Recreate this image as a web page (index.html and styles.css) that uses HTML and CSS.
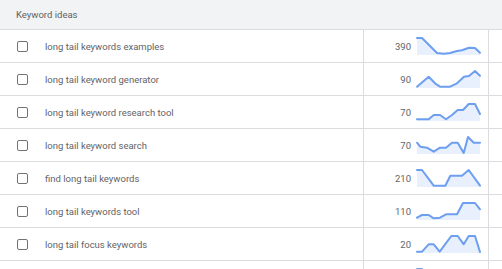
FILE: index.html
```html
<!DOCTYPE html>
<html>
<head>
<meta charset="utf-8">
<link rel="stylesheet" href="styles.css">
</head>
<body>
<div class="table">
  <div class="head">Keyword ideas</div>

  <div class="row">
    <div class="kw"><span class="cb"></span><span class="name">long tail keywords examples</span></div>
    <div class="vol"><span class="num">390</span>
      <svg class="spark" viewBox="0 0 64 18"><polygon class="area" points="0,1 5,1 20,16 27,16.7 33,16 40,14 45,13.3 52,10.7 58,11 63,15.7 63,18 0,18"/><polyline class="line" points="0,1 5,1 20,16 27,16.7 33,16 40,14 45,13.3 52,10.7 58,11 63,15.7"/></svg>
    </div>
    <div class="end"></div>
  </div>

  <div class="row">
    <div class="kw"><span class="cb"></span><span class="name">long tail keyword generator</span></div>
    <div class="vol"><span class="num">90</span>
      <svg class="spark" viewBox="0 0 64 18"><polygon class="area" points="0,16.7 11.7,6.7 18,13.3 23,16.7 33,16.7 40,13.3 47,6.7 52,6 58,1 63,5.7 63,18 0,18"/><polyline class="line" points="0,16.7 11.7,6.7 18,13.3 23,16.7 33,16.7 40,13.3 47,6.7 52,6 58,1 63,5.7"/></svg>
    </div>
    <div class="end"></div>
  </div>

  <div class="row">
    <div class="kw"><span class="cb"></span><span class="name">long tail keyword research tool</span></div>
    <div class="vol"><span class="num">70</span>
      <svg class="spark" viewBox="0 0 64 18"><polygon class="area" points="0,16.3 11.7,16.3 16.7,12 23,12 29,16.3 35,12 40.7,7 46,7 51.7,1 58,1 63,11 63,18 0,18"/><polyline class="line" points="0,16.3 11.7,16.3 16.7,12 23,12 29,16.3 35,12 40.7,7 46,7 51.7,1 58,1 63,11"/></svg>
    </div>
    <div class="end"></div>
  </div>

  <div class="row">
    <div class="kw"><span class="cb"></span><span class="name">long tail keyword search</span></div>
    <div class="vol"><span class="num">70</span>
      <svg class="spark" viewBox="0 0 64 18"><polygon class="area" points="0,6.7 3.3,10.7 10,11.7 16.7,15.7 23,11.7 29,11.7 35,6.7 40.7,6.7 46.7,17 51,1 56.7,6.7 63,6.7 63,18 0,18"/><polyline class="line" points="0,6.7 3.3,10.7 10,11.7 16.7,15.7 23,11.7 29,11.7 35,6.7 40.7,6.7 46.7,17 51,1 56.7,6.7 63,6.7"/></svg>
    </div>
    <div class="end"></div>
  </div>

  <div class="row">
    <div class="kw"><span class="cb"></span><span class="name">find long tail keywords</span></div>
    <div class="vol"><span class="num">210</span>
      <svg class="spark" viewBox="0 0 64 18"><polygon class="area" points="0,1 5,1 16.7,16.7 28.3,16.7 33.3,6.7 45,6.7 51.7,1 63,16.7 63,18 0,18"/><polyline class="line" points="0,1 5,1 16.7,16.7 28.3,16.7 33.3,6.7 45,6.7 51.7,1 63,16.7"/></svg>
    </div>
    <div class="end"></div>
  </div>

  <div class="row">
    <div class="kw"><span class="cb"></span><span class="name">long tail keywords tool</span></div>
    <div class="vol"><span class="num">110</span>
      <svg class="spark" viewBox="0 0 64 18"><polygon class="area" points="0,15.7 5,13 11.7,13 16.7,16.3 23,15.7 29,12.3 40,12.3 46,1 58,1 63,7.3 63,18 0,18"/><polyline class="line" points="0,15.7 5,13 11.7,13 16.7,16.3 23,15.7 29,12.3 40,12.3 46,1 58,1 63,7.3"/></svg>
    </div>
    <div class="end"></div>
  </div>

  <div class="row">
    <div class="kw"><span class="cb"></span><span class="name">long tail focus keywords</span></div>
    <div class="vol"><span class="num">20</span>
      <svg class="spark" viewBox="0 0 64 18"><polygon class="area" points="0,16.7 5,16.7 11.7,9.3 16.7,9.3 22.7,16.7 34.3,1 40.7,1 46.7,9.3 51.7,1 58,1 63,17 63,18 0,18"/><polyline class="line" points="0,16.7 5,16.7 11.7,9.3 16.7,9.3 22.7,16.7 34.3,1 40.7,1 46.7,9.3 51.7,1 58,1 63,17"/></svg>
    </div>
    <div class="end"></div>
  </div>

  <div class="row">
    <div class="kw"><span class="cb"></span></div>
    <div class="vol">
      <svg class="spark" viewBox="0 0 64 18"><polygon class="area" points="0,1 5,1 12,10 20,14 30,8 40,12 50,4 63,10 63,18 0,18"/><polyline class="line" points="0,1 5,1 12,10 20,14 30,8 40,12 50,4 63,10"/></svg>
    </div>
    <div class="end"></div>
  </div>
</div>
</body>
</html>
```
FILE: styles.css
```css
html, body {
  margin: 0;
  padding: 0;
  background: #ffffff;
  overflow: hidden;
}
body {
  font-family: Roboto, "Liberation Sans", Arial, sans-serif;
  color: #5f6368;
  font-size: 9.5px;
}
.table {
  width: 502px;
}
.head {
  box-sizing: border-box;
  background: #f1f3f4;
  border-bottom: 1px solid #dadce0;
  padding-left: 16px;
  padding-bottom: 1px;
  display: flex;
  align-items: center;
  height: 30px;
  color: #5f6368;
}
.row {
  display: grid;
  grid-template-columns: 363px 125px 14px;
  height: 33px;
  box-sizing: border-box;
  border-bottom: 1px solid #dadce0;
}
.kw {
  display: flex;
  align-items: center;
  padding-left: 17px;
}
.cb {
  width: 11px;
  height: 11px;
  box-sizing: border-box;
  border: 1.5px solid #6f7378;
  border-radius: 2px;
  margin-right: 17px;
  flex: none;
}
.name {
  color: #5f6368;
}
.vol {
  border-left: 1px solid #dadce0;
  display: flex;
  align-items: center;
  justify-content: flex-end;
  padding-right: 7px;
}
.num {
  color: #5f6368;
  margin-right: 6px;
}
.spark {
  width: 64px;
  height: 18px;
  overflow: visible;
  display: block;
}
.area {
  fill: #e8f0fe;
  stroke: none;
}
.line {
  fill: none;
  stroke: #6d9eef;
  stroke-width: 2;
  stroke-linejoin: round;
  stroke-linecap: round;
}
.end {
  border-left: 1px solid #dadce0;
}
```
